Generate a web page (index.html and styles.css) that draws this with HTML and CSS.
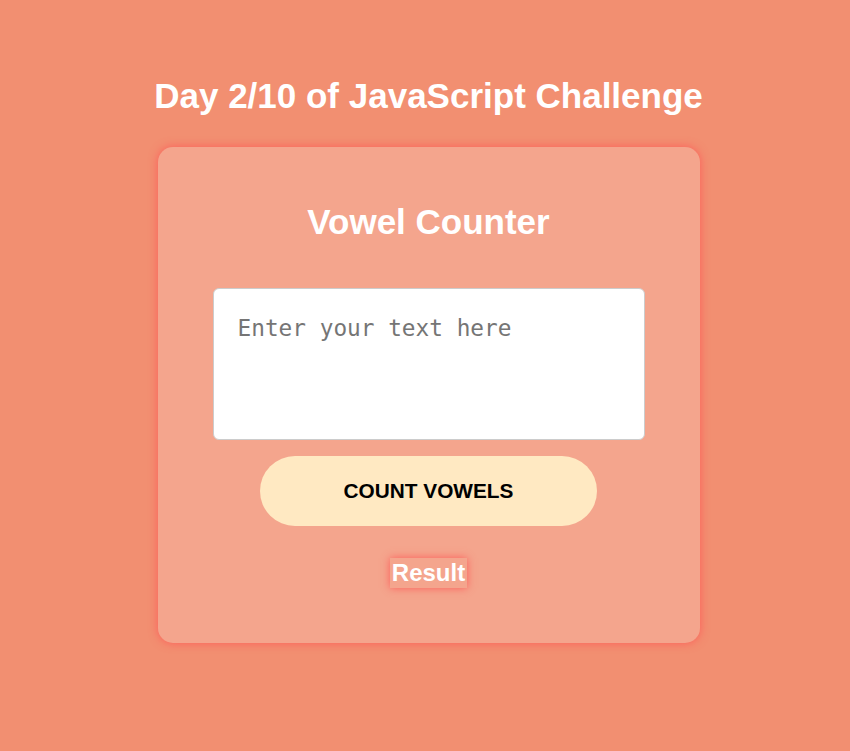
FILE: index.html
```html
<!DOCTYPE html>
<html lang="en">
<head>
<meta charset="utf-8">
<title>Vowel Counter</title>
<link rel="stylesheet" href="styles.css">
</head>
<body>
  <main class="page">
    <h1 class="title">Day 2/10 of JavaScript Challenge</h1>
    <section class="card">
      <h2 class="card-title">Vowel Counter</h2>
      <textarea class="input" placeholder="Enter your text here"></textarea>
      <button class="btn" type="button">COUNT VOWELS</button>
      <div class="result-row"><span class="result">Result</span></div>
    </section>
  </main>
</body>
</html>
```
FILE: styles.css
```css
html, body {
  margin: 0;
  padding: 0;
}
body {
  background: #f28f71;
  font-family: "Liberation Sans", Arial, sans-serif;
  color: #fff;
  min-height: 751px;
}
.page {
  display: flex;
  flex-direction: column;
  align-items: center;
  padding-top: 76px;
  padding-left: 7px;
}
.title {
  margin: 0;
  font-size: 35px;
  font-weight: bold;
  line-height: 40px;
}
.card {
  margin-top: 31px;
  width: 542px;
  box-sizing: border-box;
  padding: 55px 0 55px;
  background: rgba(255, 255, 255, 0.2);
  border-radius: 15px;
  box-shadow: 0 0 10px rgba(255, 85, 85, 0.85);
  display: flex;
  flex-direction: column;
  align-items: center;
}
.card-title {
  margin: 0;
  font-size: 35px;
  line-height: 40px;
  font-weight: bold;
}
.input {
  margin-top: 46px;
  width: 432px;
  height: 152px;
  box-sizing: border-box;
  padding: 26px 24px 24px;
  border: 1px solid #ccc;
  border-radius: 6px;
  background: #fff;
  font-family: "DejaVu Sans Mono", monospace;
  font-size: 22.75px;
  resize: none;
  outline: none;
}
.input::placeholder {
  color: #757575;
}
.btn {
  margin-top: 16px;
  width: 337px;
  height: 70px;
  border: none;
  border-radius: 35px;
  background: #ffe9c2;
  color: #000;
  font-family: "Liberation Sans", Arial, sans-serif;
  font-size: 20.8px;
  font-weight: bold;
  cursor: pointer;
}
.result-row {
  margin-top: 32px;
  display: flex;
  justify-content: center;
}
.result {
  display: inline-block;
  font-size: 24px;
  font-weight: bold;
  line-height: 30px;
  padding: 0 2px;
  box-shadow: 0 0 8px rgba(255, 80, 80, 0.85);
}
```
